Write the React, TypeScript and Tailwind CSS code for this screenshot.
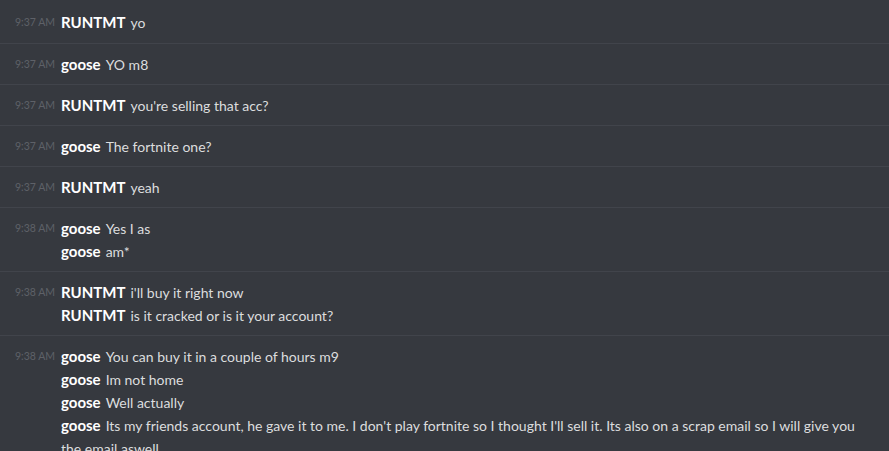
import * as React from "react";

type Line = { name: string; text: string };
type Group = { time: string; lines: Line[] };

const groups: Group[] = [
  { time: "9:37 AM", lines: [{ name: "RUNTMT", text: "yo" }] },
  { time: "9:37 AM", lines: [{ name: "goose", text: "YO m8" }] },
  { time: "9:37 AM", lines: [{ name: "RUNTMT", text: "you're selling that acc?" }] },
  { time: "9:37 AM", lines: [{ name: "goose", text: "The fortnite one?" }] },
  { time: "9:37 AM", lines: [{ name: "RUNTMT", text: "yeah" }] },
  {
    time: "9:38 AM",
    lines: [
      { name: "goose", text: "Yes I as" },
      { name: "goose", text: "am*" },
    ],
  },
  {
    time: "9:38 AM",
    lines: [
      { name: "RUNTMT", text: "i'll buy it right now" },
      { name: "RUNTMT", text: "is it cracked or is it your account?" },
    ],
  },
  {
    time: "9:38 AM",
    lines: [
      { name: "goose", text: "You can buy it in a couple of hours m9" },
      { name: "goose", text: "Im not home" },
      { name: "goose", text: "Well actually" },
      {
        name: "goose",
        text: "Its my friends account, he gave it to me. I don't play fortnite so I thought I'll sell it. Its also on a scrap email so I will give you the email aswell",
      },
    ],
  },
];

const App = () => {
  return (
    <div className="w-[889px] h-[451px] overflow-hidden bg-[#36393f] font-['Lato',sans-serif]">
      {groups.map((group, i) => (
        <div
          key={i}
          className={`flex pl-[15px] pr-[24px] ${i > 0 ? "border-t border-[#41444b] pt-[9px] pb-[8px]" : "pt-[11px] pb-[9px]"}`}
        >
          <div className="w-[46px] shrink-0 text-[10.5px] leading-[23px] text-[#5e6168] whitespace-nowrap">
            {group.time}
          </div>
          <div className="flex-1">
            {group.lines.map((line, j) => (
              <div key={j} className="text-[14px] leading-[23px] text-[#dcddde]">
                <span className="text-[15px] font-bold text-white mr-[5px]">{line.name}</span>
                {line.text}
              </div>
            ))}
          </div>
        </div>
      ))}
    </div>
  );
};

export default App;
